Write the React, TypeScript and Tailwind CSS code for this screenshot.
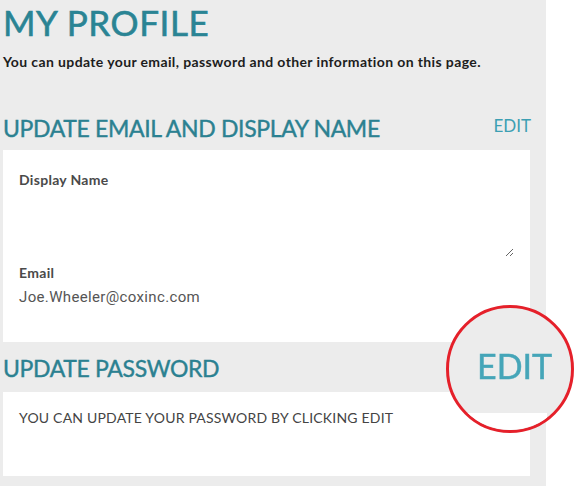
export default function App() {
  return (
    <div className="relative h-[486px] w-[576px] overflow-hidden bg-white font-['Lato',sans-serif]">
      <div className="h-full w-[546px] bg-[#ececec] pl-[3px] pr-[15px] pt-[2px]">
        <h1 className="text-[35px] leading-[40px] tracking-[0.6px] text-[#2a8494] [-webkit-text-stroke:0.6px_#2a8494]">
          MY PROFILE
        </h1>
        <p className="mt-[12px] text-[14px] font-bold leading-[16px] tracking-[0.38px] text-[#1d1d1d]">
          You can update your email, password and other information on this page.
        </p>

        <div className="mt-[44px] flex items-start justify-between">
          <h2 className="text-[23px] leading-[28px] tracking-[-0.35px] text-[#2b8191] [-webkit-text-stroke:0.4px_#2b8191]">
            UPDATE EMAIL AND DISPLAY NAME
          </h2>
          <button className="mt-[2px] text-[17px] leading-[20px] text-[#3c9fb3]">EDIT</button>
        </div>

        <div className="mt-[8px] h-[192px] w-[527px] bg-white px-[16px] pt-[22px]">
          <label className="block text-[14px] font-bold leading-[16px] tracking-[0.3px] text-[#4a4a4a]">
            Display Name
          </label>
          <textarea className="mt-[4px] block h-[65px] w-full bg-white outline-none" readOnly />
          <label className="mt-[8px] block text-[14px] font-bold leading-[16px] tracking-[0.3px] text-[#4a4a4a]">
            Email
          </label>
          <p className="mt-[6px] font-['Roboto',sans-serif] text-[15px] leading-[20px] tracking-[0.35px] text-[#555]">
            Joe.Wheeler@coxinc.com
          </p>
        </div>

        <div className="mt-[12px]">
          <h2 className="text-[23px] leading-[28px] tracking-[-0.35px] text-[#2b8191] [-webkit-text-stroke:0.4px_#2b8191]">
            UPDATE PASSWORD
          </h2>
        </div>

        <div className="mt-[10px] h-[84px] w-[527px] bg-white px-[16px] pt-[17px]">
          <p className="text-[14px] leading-[18px] tracking-[0.2px] text-[#444]">
            YOU CAN UPDATE YOUR PASSWORD BY CLICKING EDIT
          </p>
        </div>
      </div>

      {/* magnifier callout over the password EDIT */}
      <div className="absolute left-[446px] top-[305px] h-[128px] w-[128px] overflow-hidden rounded-full border-[3px] border-[#e5202a] bg-[#ececec]">
        <div className="absolute left-0 top-[105px] h-[40px] w-[98px] bg-white" />
        <button className="absolute left-[28px] top-[40px] text-[34px] leading-[35px] text-[#45a5b8] blur-[0.4px] [-webkit-text-stroke:0.5px_#45a5b8]">
          EDIT
        </button>
      </div>
    </div>
  );
}
